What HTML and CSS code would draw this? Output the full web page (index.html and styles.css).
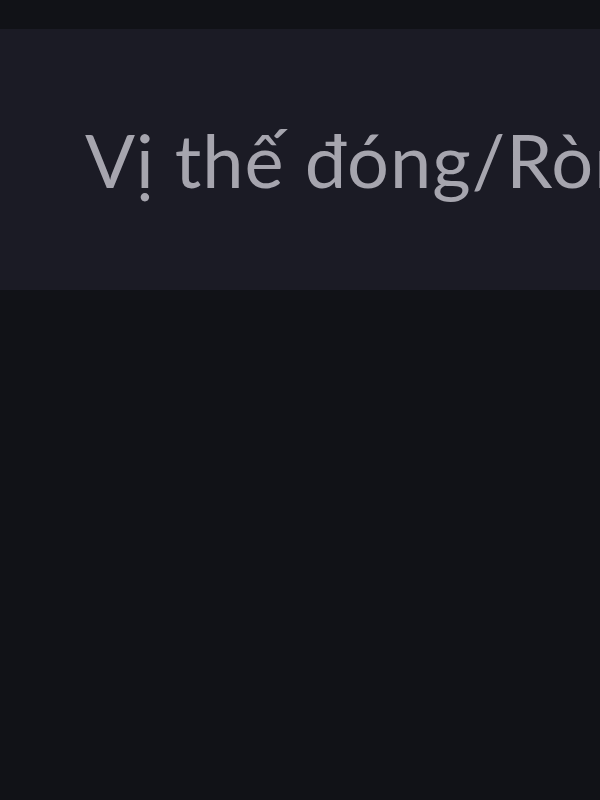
FILE: index.html
```html
<!DOCTYPE html>
<html lang="vi">
<head>
  <meta charset="UTF-8">
  <meta name="viewport" content="width=device-width, initial-scale=1.0">
  <title>Vị thế</title>
  <link rel="stylesheet" href="styles.css">
</head>
<body>
  <div class="topbar"></div>
  <div class="tab-row">
    <span class="tab-label">Vị thế đóng/Ròng</span>
  </div>
  <div class="content"></div>
</body>
</html>
```

FILE: styles.css
```css
* {
  margin: 0;
  padding: 0;
  box-sizing: border-box;
}

body {
  background-color: #111217;
  font-family: Lato, "Noto Sans", sans-serif;
  width: 600px;
  height: 800px;
  overflow: hidden;
}

.topbar {
  height: 29px;
  background-color: #111217;
}

.tab-row {
  height: 261px;
  background-color: #1b1b25;
  display: flex;
  align-items: center;
  padding-left: 85px;
  white-space: nowrap;
  overflow: hidden;
}

.tab-label {
  font-size: 74px;
  letter-spacing: 1px;
  color: #a6a5ae;
}

.content {
  flex: 1;
}
```
